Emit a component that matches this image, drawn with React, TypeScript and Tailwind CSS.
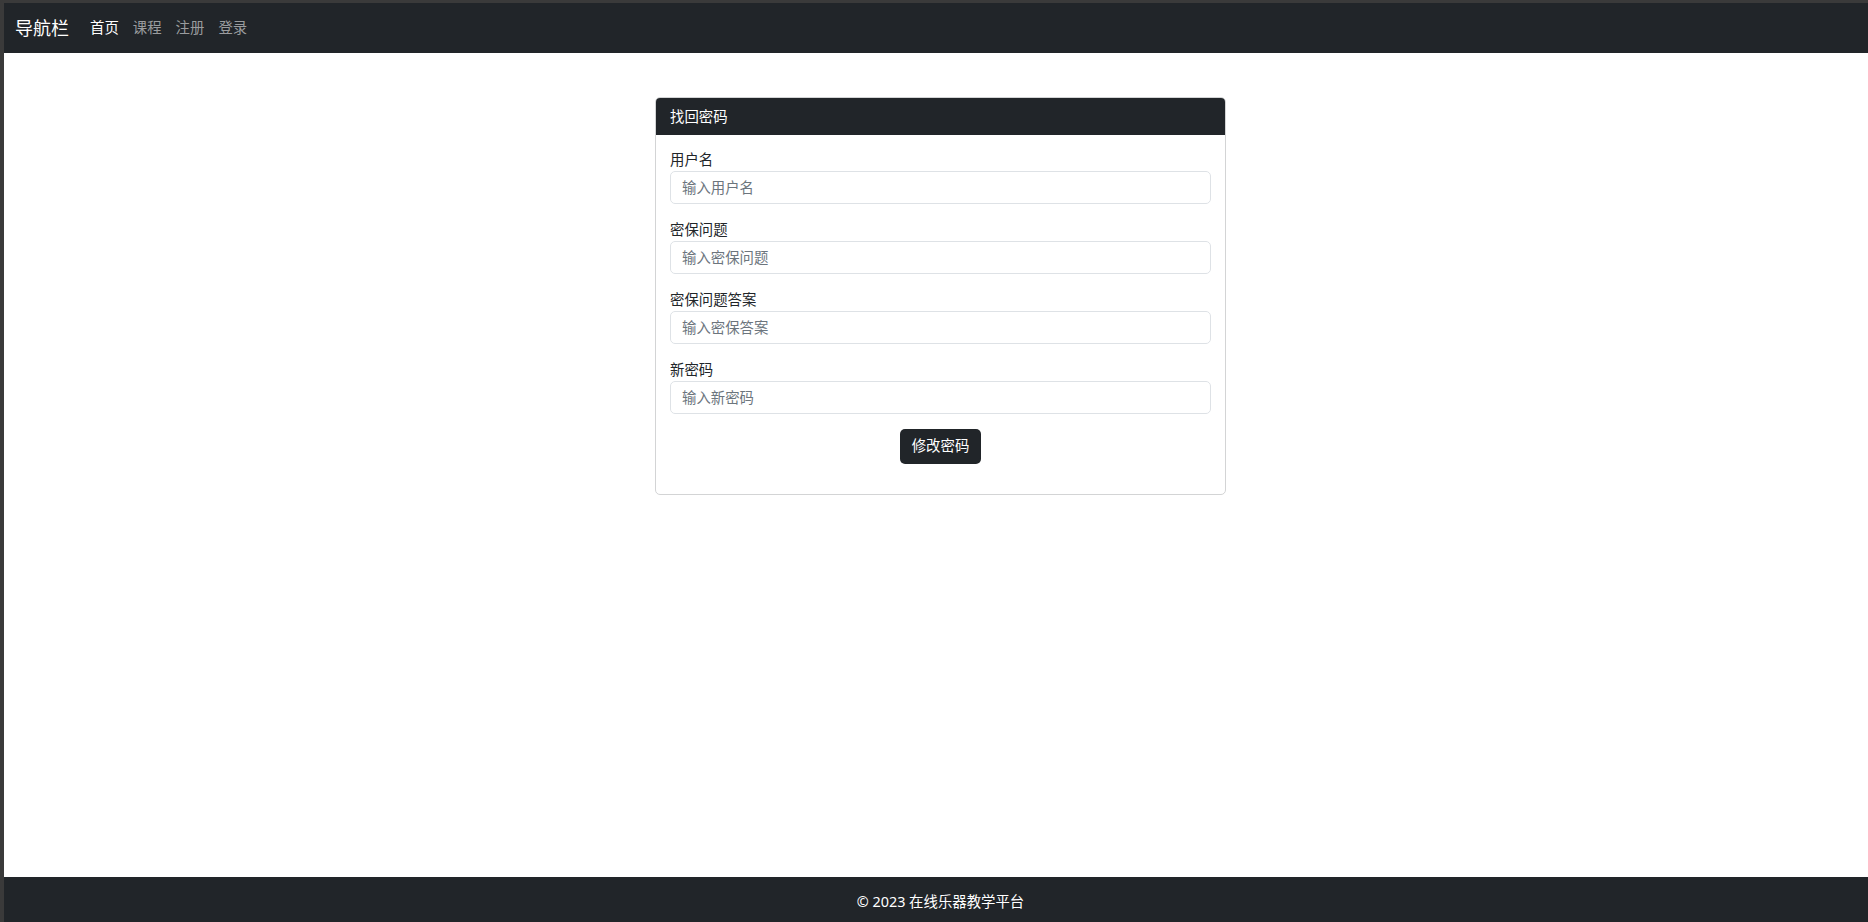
import React from 'react';

const font = { fontFamily: '"Noto Sans", "Noto Sans CJK SC", sans-serif' };

const fields = [
    { label: '用户名', placeholder: '输入用户名', type: 'text' },
    { label: '密保问题', placeholder: '输入密保问题', type: 'text' },
    { label: '密保问题答案', placeholder: '输入密保答案', type: 'text' },
    { label: '新密码', placeholder: '输入新密码', type: 'password' },
];

const links = [
    { name: '首页', active: true },
    { name: '课程', active: false },
    { name: '注册', active: false },
    { name: '登录', active: false },
];

export default function App() {
    return (
        <div className="flex h-[922px] w-[1868px] flex-col overflow-hidden bg-[#3a3a3a] pt-[3px] pl-[4px]" style={font}>
            <div className="flex w-[1873px] shrink-0 flex-1 flex-col overflow-hidden bg-white">
                {/* navbar */}
                <nav className="flex h-[50px] shrink-0 items-center bg-[#212529] px-[11px]">
                    <span className="mr-[14px] text-[18px] leading-[27px] text-white">导航栏</span>
                    <ul className="flex">
                        {links.map((l) => (
                            <li key={l.name}>
                                <a className={l.active ? 'block px-[7px] text-[14.4px] leading-[21.6px] text-white' : 'block px-[7px] text-[14.4px] leading-[21.6px] text-[#9a9c9e]'}>
                                    {l.name}
                                </a>
                            </li>
                        ))}
                    </ul>
                </nav>

                {/* content */}
                <main className="flex h-[824px] shrink-0 justify-center pt-[44px]">
                    <div className="h-fit w-[571px] overflow-hidden rounded-[5px] border border-[#d3d4d5]">
                        <div className="bg-[#212529] px-[14px] py-[7.5px] text-[14.4px] leading-[21.6px] text-white">找回密码</div>
                        <form className="px-[14px] pt-[14px] pb-[30px]">
                            {fields.map((f) => (
                                <div key={f.label} className="mb-[15px]">
                                    <label className="block text-[14.4px] leading-[22px] text-[#212529]">{f.label}</label>
                                    <input
                                        type={f.type}
                                        placeholder={f.placeholder}
                                        className="block h-[33px] w-full rounded-[5px] border border-[#dee2e6] px-[11px] text-[14.4px] text-[#212529] placeholder:text-[#6c757d] focus:outline-none"
                                    />
                                </div>
                            ))}
                            <div className="flex justify-center">
                                <button type="button" className="h-[35px] rounded-[5px] bg-[#212529] px-[12px] text-[14.4px] text-white">
                                    修改密码
                                </button>
                            </div>
                        </form>
                    </div>
                </main>

                {/* footer */}
                <footer className="h-[50px] shrink-0 bg-[#212529] py-[14px] text-center text-[14.4px] leading-[21.6px] text-white">
                    © 2023 在线乐器教学平台
                </footer>
            </div>
        </div>
    );
}
